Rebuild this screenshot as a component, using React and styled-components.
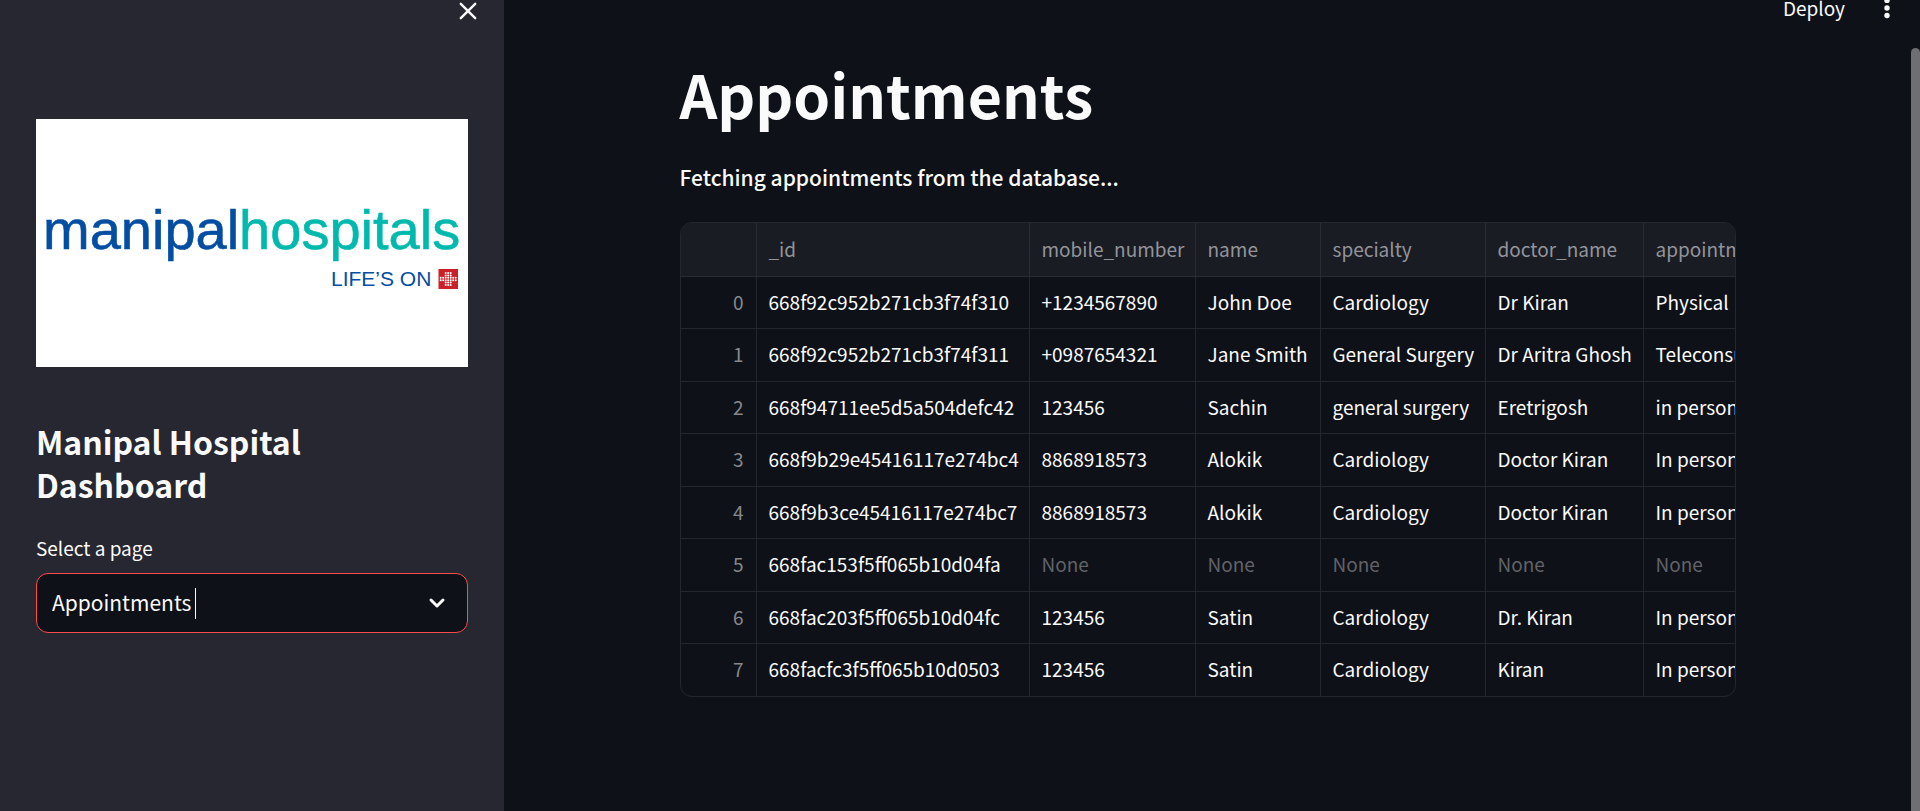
import React from "react";
import styled, { createGlobalStyle } from "styled-components";

const GlobalStyle = createGlobalStyle`
  *, *::before, *::after { box-sizing: border-box; }
  body {
    margin: 0;
    background: #0e1117;
    color: #fafafa;
    font-family: "Noto Sans CJK SC", "Noto Sans", sans-serif;
    font-size: 21px;
  }
  h1, h2, p { margin: 0; }
`;

const Page = styled.div`
  display: flex;
  min-height: 100vh;
  overflow: hidden;
`;

const Sidebar = styled.aside`
  flex: 0 0 504px;
  padding: 0 36px;
  background: #262730;
`;

const SidebarHeader = styled.div`
  display: flex;
  justify-content: flex-end;
  height: 119px;
`;

const IconButton = styled.button`
  display: flex;
  align-self: flex-start;
  padding: 0;
  border: 0;
  background: none;
  color: #fafafa;
  cursor: pointer;
`;

const CloseButton = styled(IconButton)`
  margin: 1px -10px 0 0;
`;

const Logo = styled.svg`
  display: block;
  width: 100%;
  background: #fff;
  font-family: "Liberation Sans", Arial, sans-serif;
`;

const SidebarTitle = styled.h2`
  max-width: 320px;
  margin-top: 53px;
  font-size: 32px;
  font-weight: 700;
  line-height: 43px;
`;

const FieldLabel = styled.label`
  display: block;
  margin-top: 24px;
  font-size: 19px;
  line-height: 36px;
`;

const SelectBox = styled.div`
  display: flex;
  align-items: center;
  height: 60px;
  margin-top: 7px;
  padding: 0 20px 0 15px;
  border: 1px solid #ff4b4b;
  border-radius: 12px;
  background: #0e1117;
`;

const Select = styled.select`
  appearance: none;
  field-sizing: content;
  padding: 0 0 2px;
  border: 0;
  outline: 0;
  background: transparent;
  color: inherit;
  font: inherit;
  line-height: 36px;
`;

const Caret = styled.span`
  width: 1px;
  height: 31px;
  margin-left: 4px;
  background: #fafafa;
`;

const Chevron = styled.svg`
  margin-left: auto;
`;

const Main = styled.main`
  flex: 1;
  min-width: 0;
`;

const Toolbar = styled.header`
  display: flex;
  justify-content: flex-end;
  gap: 32px;
  height: 48px;
  padding-right: 14px;
`;

const DeployButton = styled(IconButton)`
  font-family: inherit;
  font-size: 19px;
  line-height: 16px;
`;

const Content = styled.section`
  width: 100%;
  max-width: 1056px;
  margin: 0 auto;
`;

const Title = styled.h1`
  margin-top: 6px;
  font-size: 59px;
  font-weight: 700;
  line-height: 80px;
`;

const Status = styled.p`
  margin-top: 24px;
  font-weight: 500;
  line-height: 38px;
`;

const TableFrame = styled.div`
  margin-top: 26px;
  overflow: hidden;
  border: 1px solid #25272c;
  border-radius: 12px;
`;

const Table = styled.table`
  width: 1164px;
  table-layout: fixed;
  border-collapse: separate;
  border-spacing: 0;
  font-size: 19px;
  line-height: 28px;
  white-space: nowrap;
`;

const Col = styled.col`
  width: ${(p) => p.$width}px;
`;

const HeadCell = styled.th`
  height: 54px;
  padding: 0 12px 2px;
  border: solid #2b2d33;
  border-width: 0 1px 1px 0;
  background: #1a1c24;
  color: #92949a;
  font-weight: 400;
  text-align: left;
`;

const Row = styled.tr`
  height: 52px;
  &:nth-child(even) { height: 53px; }
  &:last-child { height: 52px; }
  &:last-child > * { border-bottom: 0; }
`;

const Cell = styled.td`
  padding: 0 12px 2px;
  border: solid #25272c;
  border-width: 0 1px 1px 0;
  color: ${(p) => (p.$empty ? "#606267" : "#fafafa")};
`;

const IndexCell = styled.th`
  padding: 0 12px 2px;
  border: solid #25272c;
  border-width: 0 1px 1px 0;
  color: #86888c;
  font-weight: 400;
  text-align: right;
`;

const ScrollThumb = styled.div`
  flex: 0 0 9px;
  margin-top: 48px;
  border-radius: 5px 5px 0 0;
  background: #6e6f73;
`;

const widths = [76, 273, 166, 125, 165, 158, 201];
const columns = ["_id", "mobile_number", "name", "specialty", "doctor_name", "appointment_type"];
const rows = [
  ["668f92c952b271cb3f74f310", "+1234567890", "John Doe", "Cardiology", "Dr Kiran", "Physical"],
  ["668f92c952b271cb3f74f311", "+0987654321", "Jane Smith", "General Surgery", "Dr Aritra Ghosh", "Teleconsultation"],
  ["668f94711ee5d5a504defc42", "123456", "Sachin", "general surgery", "Eretrigosh", "in person"],
  ["668f9b29e45416117e274bc4", "8868918573", "Alokik", "Cardiology", "Doctor Kiran", "In person"],
  ["668f9b3ce45416117e274bc7", "8868918573", "Alokik", "Cardiology", "Doctor Kiran", "In person"],
  ["668fac153f5ff065b10d04fa", null, null, null, null, null],
  ["668fac203f5ff065b10d04fc", "123456", "Satin", "Cardiology", "Dr. Kiran", "In person"],
  ["668facfc3f5ff065b10d0503", "123456", "Satin", "Cardiology", "Kiran", "In person"],
];

const crossDots = [];
[-7.5, -5, -2.5, 0, 2.5, 5, 7.5].forEach((x) => {
  const arm = Math.abs(x) < 3;
  (arm ? [-6, -3.6, -1.2, 1.2, 3.6, 6] : [-1.2, 1.2]).forEach((y) => crossDots.push([x, y]));
});

function HospitalLogo() {
  return (
    <Logo viewBox="0 0 432 248" role="img" aria-label="manipalhospitals LIFE’S ON">
      <text x="7" y="130" fontSize="56" fill="#034ea2" stroke="#034ea2" strokeWidth="0.6">
        manipal<tspan fill="#00b9ad" stroke="#00b9ad">hospitals</tspan>
      </text>
      <text x="295" y="167" fontSize="21" fill="#034ea2">LIFE’S ON</text>
      <rect x="402.5" y="150" width="19.5" height="20" fill="#cb2027" />
      {crossDots.map(([x, y]) => (
        <circle key={`${x},${y}`} cx={412.2 + x} cy={160 + y} r="1" fill="#fff" />
      ))}
    </Logo>
  );
}

export default function App() {
  return (
    <>
      <GlobalStyle />
      <Page>
        <Sidebar>
          <SidebarHeader>
            <CloseButton type="button" aria-label="Close sidebar">
              <svg width="20" height="20" viewBox="0 0 20 20" fill="none" stroke="currentColor" strokeWidth="2.4" strokeLinecap="round">
                <path d="M2.8 2.8 17.2 17.2M17.2 2.8 2.8 17.2" />
              </svg>
            </CloseButton>
          </SidebarHeader>
          <HospitalLogo />
          <SidebarTitle>Manipal Hospital Dashboard</SidebarTitle>
          <FieldLabel htmlFor="page">Select a page</FieldLabel>
          <SelectBox>
            <Select id="page" defaultValue="Appointments">
              <option>Appointments</option>
            </Select>
            <Caret />
            <Chevron width="20" height="14" viewBox="0 0 20 14" fill="none" stroke="currentColor" strokeWidth="3" strokeLinecap="round" strokeLinejoin="round" aria-hidden="true">
              <path d="M4 4 10 10 16 4" />
            </Chevron>
          </SelectBox>
        </Sidebar>
        <Main>
          <Toolbar>
            <DeployButton type="button">Deploy</DeployButton>
            <IconButton type="button" aria-label="Main menu">
              <svg width="20" height="20" viewBox="0 0 20 20" fill="currentColor">
                <circle cx="10" cy="0.4" r="2.7" />
                <circle cx="10" cy="8" r="2.7" />
                <circle cx="10" cy="15.5" r="2.7" />
              </svg>
            </IconButton>
          </Toolbar>
          <Content>
            <Title>Appointments</Title>
            <Status>Fetching appointments from the database...</Status>
            <TableFrame>
              <Table>
                <colgroup>
                  {widths.map((w, i) => <Col key={i} $width={w} />)}
                </colgroup>
                <thead>
                  <tr>
                    <HeadCell aria-label="Index" />
                    {columns.map((name) => <HeadCell key={name} scope="col">{name}</HeadCell>)}
                  </tr>
                </thead>
                <tbody>
                  {rows.map((row, i) => (
                    <Row key={row[0]}>
                      <IndexCell scope="row">{i}</IndexCell>
                      {row.map((value, c) => (
                        <Cell key={columns[c]} $empty={value === null}>{value ?? "None"}</Cell>
                      ))}
                    </Row>
                  ))}
                </tbody>
              </Table>
            </TableFrame>
          </Content>
        </Main>
        <ScrollThumb aria-hidden="true" />
      </Page>
    </>
  );
}
